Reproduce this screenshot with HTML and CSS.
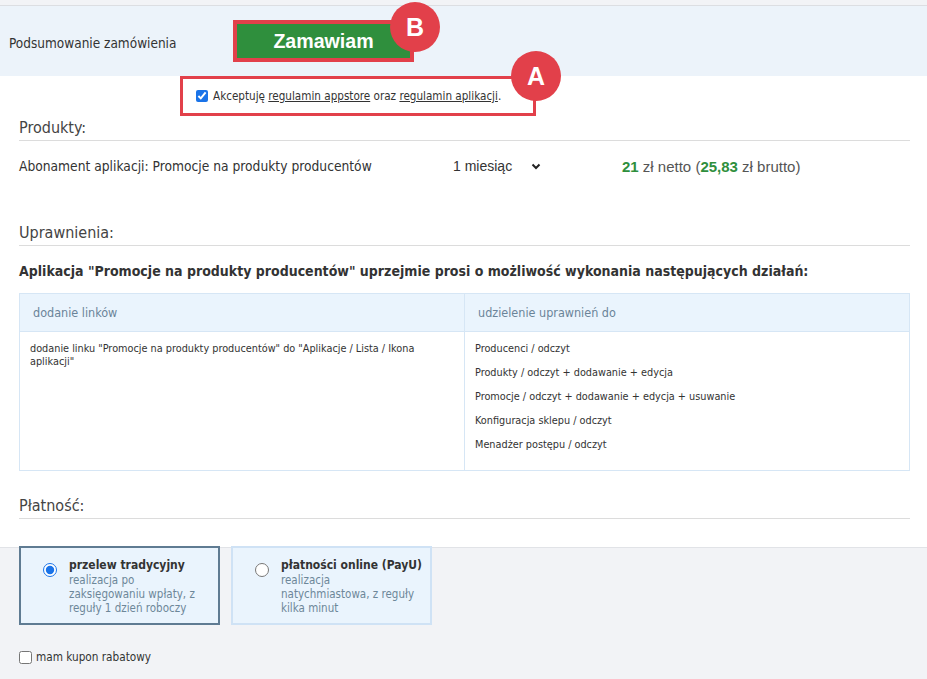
FILE: index.html
```html
<!DOCTYPE html>
<html lang="pl">
<head>
<meta charset="utf-8">
<title>Podsumowanie zamówienia</title>
<link rel="stylesheet" href="styles.css">
</head>
<body>
<div class="topbar"></div>

<div class="summary">
  <span class="summary-label">Podsumowanie zamówienia</span>
  <div class="mark mark-order">
    <button class="order-btn" type="button">Zamawiam</button>
    <span class="badge badge-b">B</span>
  </div>
</div>

<div class="mark mark-accept">
  <label class="accept">
    <input type="checkbox" checked>
    <span>Akceptuję <a href="#">regulamin appstore</a> oraz <a href="#">regulamin aplikacji</a>.</span>
  </label>
  <span class="badge badge-a">A</span>
</div>

<main class="content">
  <section class="block">
    <h2 class="block-title">Produkty:</h2>
    <div class="product-row">
      <span class="product-name">Abonament aplikacji: Promocje na produkty producentów</span>
      <span class="period">1 miesiąc
        <svg class="chevron" width="10" height="7" viewBox="0 0 10 7"><path d="M1.5 1.5 5 5 8.5 1.5" fill="none" stroke="#222" stroke-width="2"/></svg>
      </span>
      <span class="price"><b>21</b> zł netto (<b>25,83</b> zł brutto)</span>
    </div>
  </section>

  <section class="block block-perms">
    <h2 class="block-title">Uprawnienia:</h2>
    <p class="perm-lead">Aplikacja "Promocje na produkty producentów" uprzejmie prosi o możliwość wykonania następujących działań:</p>
    <table class="perm-table">
      <thead>
        <tr><th>dodanie linków</th><th>udzielenie uprawnień do</th></tr>
      </thead>
      <tbody>
        <tr>
          <td>dodanie linku "Promocje na produkty producentów" do "Aplikacje / Lista / Ikona aplikacji"</td>
          <td>
            <ul class="perm-list">
              <li>Producenci / odczyt</li>
              <li>Produkty / odczyt + dodawanie + edycja</li>
              <li>Promocje / odczyt + dodawanie + edycja + usuwanie</li>
              <li>Konfiguracja sklepu / odczyt</li>
              <li>Menadżer postępu / odczyt</li>
            </ul>
          </td>
        </tr>
      </tbody>
    </table>
  </section>

  <section class="block block-pay">
    <h2 class="block-title">Płatność:</h2>
  </section>
</main>

<div class="payment-area">
  <div class="pay-options">
    <label class="pay-card is-active">
      <input type="radio" name="pay" checked>
      <span class="pay-text">
        <strong>przelew tradycyjny</strong>
        <span class="pay-desc">realizacja po zaksięgowaniu wpłaty, z reguły 1 dzień roboczy</span>
      </span>
    </label>
    <label class="pay-card">
      <input type="radio" name="pay">
      <span class="pay-text">
        <strong>płatności online (PayU)</strong>
        <span class="pay-desc">realizacja natychmiastowa, z reguły kilka minut</span>
      </span>
    </label>
  </div>
  <label class="coupon">
    <input type="checkbox">
    <span>mam kupon rabatowy</span>
  </label>
</div>
</body>
</html>
```

FILE: styles.css
```css
* { box-sizing: border-box; }

html, body {
  margin: 0;
  padding: 0;
}

body {
  font-family: "DejaVu Sans", Verdana, sans-serif;
  font-stretch: condensed;
  color: #333;
  background: #fff;
  font-size: 12px;
}

.topbar {
  height: 6px;
  background: #f2f3f6;
  border-bottom: 1px solid #dcdee2;
}

.summary {
  height: 70px;
  background: #ecf3fa;
  display: flex;
  align-items: center;
  padding-left: 9px;
}

.summary-label {
  width: 224px;
  font-size: 13.5px;
  color: #333;
  padding-top: 3px;
}

/* red callout frames */
.mark {
  position: relative;
  border: 4px solid #e2404a;
}

.order-btn {
  display: block;
  width: 173px;
  height: 34px;
  border: 0;
  margin: 0;
  background: #2f8f3d;
  color: #fff;
  font-family: "Liberation Sans", Arial, sans-serif;
  font-weight: bold;
  font-size: 19.6px;
  padding: 0;
}

.badge {
  position: absolute;
  width: 50px;
  height: 50px;
  border-radius: 50%;
  background: #e2404a;
  color: #fff;
  font-family: "Liberation Sans", Arial, sans-serif;
  font-weight: bold;
  font-size: 25px;
  display: flex;
  align-items: center;
  justify-content: center;
}

.badge-b {
  left: 153px;
  top: -22px;
}

.mark-accept {
  margin-left: 180px;
  width: 356px;
  height: 40px;
  border-width: 3px;
  display: flex;
  align-items: center;
  padding-left: 13px;
}

.badge-a {
  left: 328px;
  top: -28px;
}

.accept {
  display: flex;
  align-items: center;
  font-size: 11.6px;
  color: #333;
}

.accept input {
  margin: 0 5px 0 0;
  width: 12px;
  height: 12px;
  accent-color: #1a73e8;
}

.accept a {
  color: #333;
  text-decoration: underline;
}

/* main sections */
.content {
  padding: 0 17px 0 19px;
}

.block-title {
  margin: 0;
  font-weight: normal;
  font-size: 16px;
  color: #444;
  border-bottom: 1px solid #dcdcdc;
  padding: 4px 0 4px;
  line-height: 16px;
}

.product-row {
  display: flex;
  align-items: center;
  height: 50px;
  font-size: 13.7px;
}

.product-name {
  width: 434px;
}

.period {
  width: 169px;
  display: flex;
  align-items: center;
  font-family: "Liberation Sans", Arial, sans-serif;
  font-size: 14px;
  color: #333;
}

.chevron {
  margin-left: 19px;
}

.price {
  font-family: "Liberation Sans", Arial, sans-serif;
  font-size: 15px;
  color: #555;
}

.price b {
  color: #2f8f3d;
}

.block-perms {
  margin-top: 30px;
}

.perm-lead {
  margin: 17px 0 14px;
  font-weight: bold;
  font-size: 14px;
  color: #333;
}

.perm-table {
  width: 100%;
  border-collapse: collapse;
  table-layout: fixed;
  border: 1px solid #d6e6f5;
}

.perm-table th {
  background: #eaf4fd;
  color: #6b8499;
  font-weight: normal;
  font-size: 12.5px;
  text-align: left;
  height: 38px;
  padding: 0 13px;
  border: 1px solid #d6e6f5;
}

.perm-table td {
  vertical-align: top;
  font-size: 10.8px;
  line-height: 13px;
  padding: 10px 10px 8px;
  border: 1px solid #d6e6f5;
}

.perm-list {
  list-style: none;
  margin: 0;
  padding: 0;
}

.perm-list li {
  height: 24px;
}

.block-pay {
  margin-top: 23px;
}

.payment-area {
  margin-top: 28px;
  background: #f2f3f6;
  border-top: 1px solid #e1e3e7;
  padding: 0 19px 20px;
  min-height: 140px;
}

.pay-options {
  display: flex;
  gap: 11px;
  margin-top: -2px;
}

.pay-card {
  width: 201px;
  height: 79px;
  background: #eaf4fd;
  border: 2px solid #cfe2f5;
  display: flex;
  align-items: flex-start;
  padding: 10px 4px 0 22px;
}

.pay-card.is-active {
  border-color: #5f7b92;
}

.pay-card input {
  margin: 5px 12px 0 0;
  width: 14px;
  height: 14px;
  flex: none;
  accent-color: #1a73e8;
}

.pay-text {
  display: flex;
  flex-direction: column;
  font-size: 11.5px;
  line-height: 14px;
}

.pay-text strong {
  font-size: 12px;
  line-height: 15px;
  color: #333;
  white-space: nowrap;
}

.pay-desc {
  color: #6d8799;
  padding-right: 8px;
}

.coupon {
  display: flex;
  align-items: center;
  margin-top: 25px;
  font-size: 11.7px;
  color: #333;
}

.coupon input {
  margin: 0 4px 0 0;
  width: 13px;
  height: 13px;
}
```
